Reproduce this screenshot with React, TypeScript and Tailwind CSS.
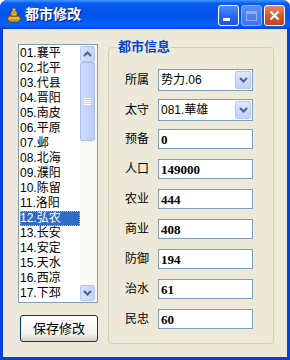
import React from 'react';

const cities = [
  '01.襄平',
  '02.北平',
  '03.代县',
  '04.晋阳',
  '05.南皮',
  '06.平原',
  '07.邺',
  '08.北海',
  '09.濮阳',
  '10.陈留',
  '11.洛阳',
  '12.弘农',
  '13.长安',
  '14.安定',
  '15.天水',
  '16.西凉',
  '17.下邳',
];

const stats = [
  { label: '预备', value: '0' },
  { label: '人口', value: '149000' },
  { label: '农业', value: '444' },
  { label: '商业', value: '408' },
  { label: '防御', value: '194' },
  { label: '治水', value: '61' },
  { label: '民忠', value: '60' },
];

const Chevron = ({ up = false }: { up?: boolean }) => (
  <svg width="9" height="6" viewBox="0 0 9 6">
    <polyline
      points={up ? '1,5 4.5,1.5 8,5' : '1,1 4.5,4.5 8,1'}
      fill="none"
      stroke="#4D6185"
      strokeWidth="2"
    />
  </svg>
);

// small gold figure in the caption
const GoldIcon = () => (
  <svg width="16" height="16" viewBox="0 0 16 16">
    <path d="M1 12 L3 9 L13 9 L15 12 L12 15 L4 15 Z" fill="#C9971C" stroke="#6B4A06" strokeWidth="0.8" />
    <path d="M5 9 L5 5 L7 3 L9 3 L11 5 L11 9 Z" fill="#E7C04A" stroke="#6B4A06" strokeWidth="0.8" />
    <circle cx="8" cy="2.6" r="1.6" fill="#F2D470" stroke="#6B4A06" strokeWidth="0.6" />
    <path d="M3 11 L13 11" stroke="#F6E08A" strokeWidth="1" />
    <path d="M6 6 L10 6" stroke="#8A6410" strokeWidth="0.8" />
  </svg>
);

const TitleBar = () => (
  <div className="flex h-[29px] shrink-0 rounded-t-[7px] bg-[linear-gradient(to_bottom,#3D95FF_0%,#0A5CF0_12%,#0052EA_45%,#0760F8_85%,#0558F0_93%,#003DD7_100%)] pl-[6px] pr-[5px]">
    <div className="mt-[7px] h-[16px] w-[16px]">
      <GoldIcon />
    </div>
    <span className="ml-[3px] mt-[5px] text-[14px] font-bold leading-[18px] text-white [text-shadow:1px_1px_0_#0A1883]">
      都市修改
    </span>
    <div className="ml-auto mt-[5px] flex gap-[2px]">
      <div className="relative h-[21px] w-[21px] rounded-[3px] border border-white bg-[linear-gradient(to_bottom,#4F8BFF,#2563F0_60%,#1C55E0)]">
        <div className="absolute bottom-[4px] left-[4px] h-[3px] w-[7px] bg-white" />
      </div>
      <div className="flex h-[21px] w-[21px] items-center justify-center rounded-[3px] border border-[#8FAEF2] bg-[linear-gradient(to_bottom,#5B8EF6,#3F74EA)]">
        <div className="h-[10px] w-[11px] border border-t-[3px] border-[#8FAEF2]" />
      </div>
      <div className="flex h-[21px] w-[21px] items-center justify-center rounded-[3px] border border-white bg-[linear-gradient(to_bottom,#E8876A,#D6562E_50%,#C4421B)]">
        <svg width="11" height="11" viewBox="0 0 11 11">
          <path d="M1.5 1.5 L9.5 9.5 M9.5 1.5 L1.5 9.5" stroke="white" strokeWidth="2.2" />
        </svg>
      </div>
    </div>
  </div>
);

const ScrollBar = () => (
  <div className="flex w-[17px] flex-col bg-[#FAFAF6] py-[1px]">
    <div className="flex h-[16px] w-[15px] items-center justify-center rounded-[2px] border border-[#B6C9F4] bg-[linear-gradient(to_right,#D6E2FD,#C2D3FB)]">
      <Chevron up />
    </div>
    <div className="flex h-[79px] w-[15px] flex-col items-center justify-center gap-[1px] rounded-[2px] border border-[#A9BEF0] bg-[linear-gradient(to_right,#CFDCFD,#BACDFA)]">
      <div className="h-[1px] w-[7px] bg-white" />
      <div className="h-[1px] w-[7px] bg-white" />
      <div className="h-[1px] w-[7px] bg-white" />
      <div className="h-[1px] w-[7px] bg-white" />
    </div>
    <div className="flex-1" />
    <div className="flex h-[16px] w-[15px] items-center justify-center rounded-[2px] border border-[#B6C9F4] bg-[linear-gradient(to_right,#D6E2FD,#C2D3FB)]">
      <Chevron />
    </div>
  </div>
);

const Combo = ({ children }: { children: React.ReactNode }) => (
  <div className="flex h-[22px] w-[95px] items-center border border-[#7F9DB9] bg-white pl-[2px] pr-[1px]">
    <span className="flex-1 text-[12px] leading-[14px] text-black">{children}</span>
    <div className="flex h-[18px] w-[16px] items-center justify-center rounded-[2px] border border-[#B6C9F4] bg-[linear-gradient(to_bottom,#DCE6FD,#C0D1FA)]">
      <Chevron />
    </div>
  </div>
);

export default function App() {
  return (
    <div className="flex h-[360px] w-[290px] flex-col rounded-t-[8px] bg-[#0842D4] font-['Liberation_Sans','Noto_Sans_CJK_SC',sans-serif]">
      <TitleBar />
      <div className="mx-[3px] mb-[3px] flex flex-1 bg-[#ECE9D8]">
        {/* city list + save */}
        <div className="ml-[15px] mt-[15px] flex flex-col">
          <div className="flex h-[259px] w-[80px] border border-[#7F9DB9] bg-white">
            <div className="flex-1 pl-[1px] pt-[1px]">
              {cities.map((c, i) => (
                <div
                  key={c}
                  className={
                    i === 11
                      ? 'h-[15px] bg-[#316AC5] text-[12px] leading-[15px] text-white outline-1 -outline-offset-1 outline-dotted outline-[#E9B65A]'
                      : 'h-[15px] text-[12px] leading-[15px] text-black'
                  }
                >
                  {c}
                </div>
              ))}
            </div>
            <ScrollBar />
          </div>
          <button className="ml-[2px] mt-[12px] h-[27px] w-[78px] rounded-[3px] border border-[#003C74] bg-[linear-gradient(to_bottom,#FFFFFF,#F4F3EE_70%,#D6D0C5)] text-[13px] text-black">
            保存修改
          </button>
        </div>

        {/* city info group */}
        <div className="relative ml-[10px] mt-[18px] h-[297px] w-[166px] rounded-[4px] border border-[#D0D0BF] pl-[16px] pt-[21px]">
          <span className="absolute left-[8px] top-[-9px] bg-[#ECE9D8] px-[1px] text-[13px] font-bold leading-[16px] text-[#0046D5]">
            都市信息
          </span>
          <div className="mb-[8px] flex h-[22px] items-center">
            <span className="w-[33px] text-[12px] text-black">所属</span>
            <Combo>势力.06</Combo>
          </div>
          <div className="mb-[8px] flex h-[22px] items-center">
            <span className="w-[33px] text-[12px] text-black">太守</span>
            <Combo>081.華雄</Combo>
          </div>
          {stats.map((s) => (
            <div key={s.label} className="mb-[10px] flex h-[20px] items-center">
              <span className="w-[33px] text-[12px] text-black">{s.label}</span>
              <div className="flex h-[20px] w-[95px] items-center border border-[#7F9DB9] bg-white pl-[2px]">
                <span className="font-['Liberation_Serif',serif] text-[13px] font-bold leading-[15px] text-black">
                  {s.value}
                </span>
              </div>
            </div>
          ))}
        </div>
      </div>
    </div>
  );
}
